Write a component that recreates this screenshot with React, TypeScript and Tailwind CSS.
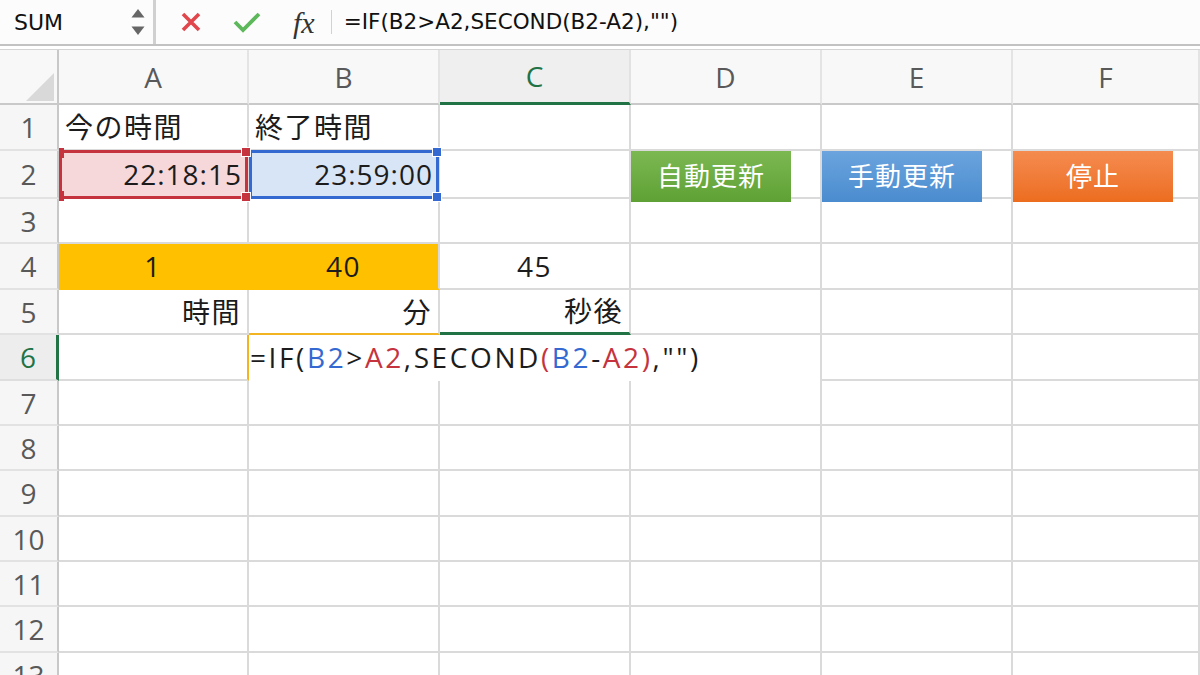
import React from "react";

const line = "border-r-2 border-b-2 border-[#dadada]";
const cellText = "text-[28px] text-[#1c1c1c] tracking-[1.5px]";

function RowHead({ n, active }: { n: number; active?: boolean }) {
  if (active) {
    return (
      <div className="flex items-center justify-center bg-[#ededed] border-b-2 border-b-[#dedede] border-r-[3px] border-r-[#217346] text-[28px] text-[#217346]">
        {n}
      </div>
    );
  }
  return (
    <div className="flex items-center justify-center bg-[#f6f6f6] border-b-2 border-b-[#e2e2e2] border-r-2 border-r-[#c8c8c8] text-[28px] text-[#595959]">
      {n}
    </div>
  );
}

function ColHead({ label, active }: { label: string; active?: boolean }) {
  if (active) {
    return (
      <div className="flex items-center justify-center bg-[#efefef] border-r-2 border-r-[#e2e2e2] border-b-[3px] border-b-[#217346] text-[28px] text-[#217346]">
        {label}
      </div>
    );
  }
  return (
    <div className="flex items-center justify-center bg-[#f8f8f8] border-r-2 border-r-[#e4e4e4] border-b-2 border-b-[#c9c9c9] text-[28px] text-[#595959]">
      {label}
    </div>
  );
}

function Empty() {
  return <div className={line} />;
}

function Btn({ label, color }: { label: string; color: string }) {
  return (
    <div className={`${line} relative`}>
      <div
        className={`absolute left-0 top-0 z-10 flex h-[51px] w-[160px] items-center justify-center text-[26px] tracking-[1px] text-white ${color}`}
      >
        {label}
      </div>
    </div>
  );
}

export default function App() {
  return (
    <div className="h-[675px] w-[1200px] overflow-hidden bg-white font-['Open_Sans','Noto_Sans_CJK_JP',sans-serif]">
      {/* formula bar */}
      <div className="flex h-[46px] items-center border-b-2 border-b-[#c2c2c2] bg-[#fcfcfc] font-['DejaVu_Sans','Noto_Sans_CJK_JP',sans-serif]">
        <div className="flex h-full w-[156px] items-center justify-between border-r-[3px] border-r-[#d0d0d0] pl-[14px] pr-[8px]">
          <span className="text-[22px] text-[#111]">SUM</span>
          <svg width="14" height="30" viewBox="0 0 14 30">
            <polygon points="7,2 13.5,10.5 0.5,10.5" fill="#666" />
            <polygon points="0.5,19.5 13.5,19.5 7,28" fill="#666" />
          </svg>
        </div>
        <svg className="ml-[24px]" width="22" height="22" viewBox="0 0 22 22">
          <path d="M3 3 L19 19 M19 3 L3 19" stroke="#e0464b" strokeWidth="3.6" />
        </svg>
        <svg className="ml-[31px]" width="28" height="22" viewBox="0 0 28 22">
          <polyline points="2,11 10,19 26,3" fill="none" stroke="#5cb85a" strokeWidth="3.8" />
        </svg>
        <span className="ml-[32px] font-['Liberation_Serif',serif] text-[30px] italic text-[#333]">fx</span>
        <div className="ml-[16px] h-[24px] w-px bg-[#d2d2d2]" />
        <span className="ml-[12px] text-[21.5px] text-[#111]">=IF(B2&gt;A2,SECOND(B2-A2),&quot;&quot;)</span>
      </div>
      <div className="h-[3px] bg-white" />
      <div className="h-px bg-[#d4d4d4]" />

      {/* sheet */}
      <div className="grid grid-cols-[59px_190px_191px_191px_191px_191px_1fr] grid-rows-[55px_46px_48px_45px_46px_45px_46px_45px_45px_46px_45px_45px_46px_45px]">
        {/* header row */}
        <div className="relative bg-[#f8f8f8] border-r-2 border-r-[#c8c8c8] border-b-2 border-b-[#c9c9c9]">
          <svg className="absolute bottom-[2px] right-[3px]" width="28" height="28" viewBox="0 0 28 28">
            <polygon points="28,0 28,28 0,28" fill="#d9d9d9" />
          </svg>
        </div>
        <ColHead label="A" />
        <ColHead label="B" />
        <ColHead label="C" active />
        <ColHead label="D" />
        <ColHead label="E" />
        <ColHead label="F" />

        {/* row 1 */}
        <RowHead n={1} />
        <div className={`${line} ${cellText} flex items-center pl-[6px]`}>今の時間</div>
        <div className={`${line} ${cellText} flex items-center pl-[6px]`}>終了時間</div>
        <Empty />
        <Empty />
        <Empty />
        <Empty />

        {/* row 2 */}
        <RowHead n={2} />
        <div className="relative flex items-center justify-end border-b-2 border-r-2 border-[#dadada] bg-[#f6d7da] pr-[5px] text-[28px] tracking-[1px] text-[#1c1c1c]">
          22:18:15
          <div className="absolute -bottom-[2px] -right-[1px] -top-px left-0 z-20 border-[3px] border-[#c5333e]">
            <div className="absolute -left-[3px] -top-[5px] h-[10px] w-[5px] bg-[#c5333e]" />
            <div className="absolute -bottom-[5px] -left-[3px] h-[10px] w-[5px] bg-[#c5333e]" />
            <div className="absolute -right-[6px] -top-[6px] h-[10px] w-[10px] border border-white bg-[#c5333e]" />
            <div className="absolute -bottom-[6px] -right-[6px] h-[10px] w-[10px] border border-white bg-[#c5333e]" />
          </div>
        </div>
        <div className="relative flex items-center justify-end border-b-2 border-r-2 border-[#dadada] bg-[#d8e5f7] pr-[5px] text-[28px] tracking-[1px] text-[#1c1c1c]">
          23:59:00
          <div className="absolute -bottom-[2px] -right-[1px] -top-px left-0 z-10 border-[3px] border-[#3469d1]">
            <div className="absolute -right-[6px] -top-[6px] h-[10px] w-[10px] border border-white bg-[#3469d1]" />
            <div className="absolute -bottom-[6px] -right-[6px] h-[10px] w-[10px] border border-white bg-[#3469d1]" />
          </div>
        </div>
        <Empty />
        <Btn label="自動更新" color="bg-linear-to-b from-[#7cb852] to-[#5fa134]" />
        <Btn label="手動更新" color="bg-linear-to-b from-[#6ba4de] to-[#4a8ccf]" />
        <Btn label="停止" color="bg-linear-to-b from-[#f58b4f] to-[#ec6d1d]" />

        {/* row 3 */}
        <RowHead n={3} />
        <Empty />
        <Empty />
        <Empty />
        <Empty />
        <Empty />
        <Empty />

        {/* row 4 */}
        <RowHead n={4} />
        <div className={`${cellText} flex items-center justify-center border-b-2 border-r-2 border-[#ffc000] bg-[#ffc000]`}>1</div>
        <div className={`${cellText} flex items-center justify-center border-b-2 border-r-2 border-b-[#ffc000] border-r-[#dadada] bg-[#ffc000]`}>40</div>
        <div className={`${line} ${cellText} flex items-center justify-center`}>45</div>
        <Empty />
        <Empty />
        <Empty />

        {/* row 5 */}
        <RowHead n={5} />
        <div className={`${line} ${cellText} flex items-center justify-end pr-[6px]`}>時間</div>
        <div className={`${cellText} flex items-center justify-end border-b-2 border-r-2 border-b-[#f2b420] border-r-[#dadada] pr-[6px]`}>分</div>
        <div className={`${cellText} flex items-center justify-end border-b-[3px] border-r-2 border-b-[#217346] border-r-[#dadada] pr-[6px]`}>秒後</div>
        <Empty />
        <Empty />
        <Empty />

        {/* row 6 */}
        <RowHead n={6} active />
        <div className="border-b-2 border-r-2 border-b-[#dadada] border-r-[#f2b420]" />
        <div className="col-span-3 flex items-center border-r-2 border-r-[#dadada] bg-white pb-[3px] pl-[1px] text-[28px] tracking-[2.6px] text-[#1c1c1c]">
          <span>=IF(</span>
          <span className="text-[#3469d1]">B2</span>
          <span>&gt;</span>
          <span className="text-[#c5333e]">A2</span>
          <span>,SECOND</span>
          <span className="text-[#c5333e]">(</span>
          <span className="text-[#3469d1]">B2</span>
          <span>-</span>
          <span className="text-[#c5333e]">A2)</span>
          <span>,&quot;&quot;)</span>
        </div>
        <Empty />
        <Empty />

        {/* rows 7-13 */}
        {[7, 8, 9, 10, 11, 12, 13].map((n) => (
          <React.Fragment key={n}>
            <RowHead n={n} />
            <Empty />
            <Empty />
            <Empty />
            <Empty />
            <Empty />
            <Empty />
          </React.Fragment>
        ))}
      </div>
    </div>
  );
}
